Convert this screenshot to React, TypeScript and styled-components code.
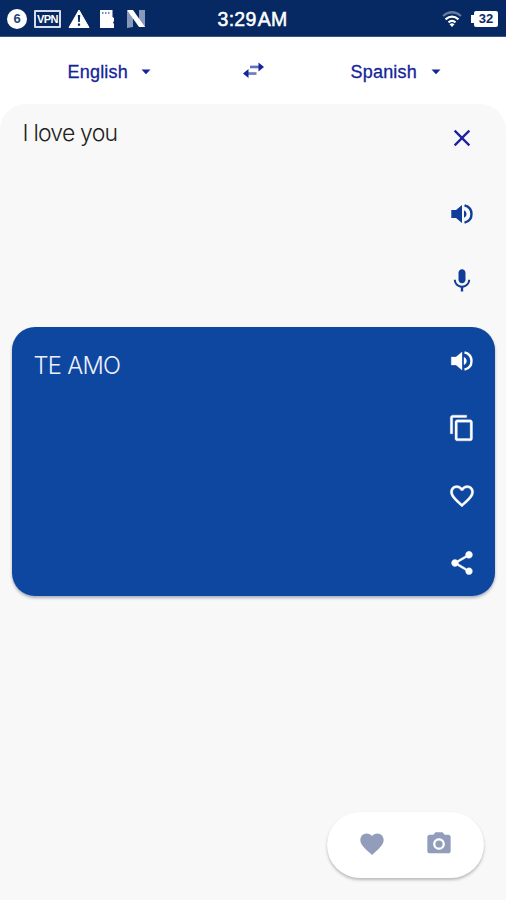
import React from 'react';
import styled, { createGlobalStyle } from 'styled-components';

const Global = createGlobalStyle`
  * { box-sizing: border-box; }
  body { margin: 0; background: #fff; font-family: "Liberation Sans", Arial, sans-serif; }
  button { border: 0; padding: 0; background: none; font: inherit; color: inherit; display: flex; align-items: center; }
  svg { display: block; flex: none; }
`;

const Screen = styled.div`
  width: 506px;
  height: 900px;
  display: flex;
  flex-direction: column;
  overflow: hidden;
  background: #fff;
`;

const StatusBar = styled.header`
  height: 37px;
  flex: none;
  display: grid;
  grid-template-columns: 1fr auto 1fr;
  align-items: center;
  padding: 1px 8px 0 7px;
  background: #062963;
  border-bottom: 1px solid #3c5583;
  color: #fff;
`;

const StatusGroup = styled.div<{ $end?: boolean }>`
  display: flex;
  align-items: center;
  justify-content: ${p => (p.$end ? 'flex-end' : 'flex-start')};
  gap: ${p => (p.$end ? 9 : 7)}px;
`;

const Clock = styled.time`
  width: 70px;
  padding-top: 1px;
  font-size: 19.5px;
  line-height: 22px;
  white-space: nowrap;
  -webkit-text-stroke: 0.5px #fff;
  word-spacing: -3.5px;
  letter-spacing: 0.3px;
`;

const Badge = styled.span`
  width: 20px;
  height: 20px;
  border-radius: 50%;
  background: #fff;
  color: #24427a;
  font-size: 13px;
  font-weight: 700;
  line-height: 20px;
  text-align: center;
`;

const VpnTag = styled.span`
  width: 27px;
  height: 18px;
  border: 2px solid #d5dceb;
  border-radius: 1px;
  font-size: 11px;
  font-weight: 700;
  line-height: 14px;
  letter-spacing: -0.5px;
  text-align: center;
`;

const Battery = styled.span`
  display: flex;
  align-items: center;
  &::before { content: ''; width: 3px; height: 8px; background: #fff; }
`;

const BatteryBody = styled.span`
  width: 24px;
  height: 16px;
  border-radius: 2px;
  background: #fff;
  color: #0a2a66;
  font-size: 13px;
  font-weight: 700;
  line-height: 16px;
  text-align: center;
`;

const LanguageBar = styled.nav`
  height: 67px;
  flex: none;
  display: grid;
  grid-template-columns: 238px 31px 1fr;
  align-items: center;
  padding-top: 3px;
  color: #14259a;
`;

const Language = styled.button<{ $start: number; $label: number }>`
  && {
    padding-left: ${p => p.$start}px;
    font-size: 18px;
  }
  line-height: 24px;
  -webkit-text-stroke: 0.3px currentColor;
  span { width: ${p => p.$label}px; text-align: left; letter-spacing: 0.2px; white-space: nowrap; }
`;

const Sheet = styled.main`
  flex: 1;
  display: flex;
  flex-direction: column;
  border-radius: 26px 26px 0 0;
  background: #f8f8f8;
`;

const Source = styled.section`
  height: 223px;
  flex: none;
  display: flex;
  justify-content: space-between;
  padding: 16px 30.5px 0 22.5px;
  color: #222;
`;

const Phrase = styled.p<{ $spacing: number; $size: number }>`
  margin: 0;
  font-family: Inter, "Liberation Sans", sans-serif;
  font-size: ${p => p.$size}px;
  font-weight: 300;
  line-height: 26px;
  letter-spacing: ${p => p.$spacing}px;
  white-space: nowrap;
`;

const SourceActions = styled.div`
  display: flex;
  flex-direction: column;
  align-items: center;
  color: #103c9a;
  button:nth-child(1) { margin: 4px 0 48px; color: #1c249c; }
  button:nth-child(2) { margin-bottom: 39px; }
`;

const Card = styled.section`
  height: 269px;
  flex: none;
  display: flex;
  justify-content: space-between;
  margin: 0 11px 0 12px;
  padding: 20px 19.5px 0 21.5px;
  border-radius: 23px;
  background: #0e479f;
  color: #fff;
  box-shadow: 0 2px 3px rgba(30, 40, 80, 0.35);
`;

const CardText = styled.div`
  padding-top: 6px;
  color: #eef0ff;
`;

const CardActions = styled.div`
  display: flex;
  flex-direction: column;
  gap: 39.3px;
  path { stroke: currentColor; stroke-width: 0.3; }
`;

const Dock = styled.div`
  width: 157px;
  height: 66px;
  margin: auto 22px 22px auto;
  display: flex;
  align-items: center;
  justify-content: center;
  gap: 39px;
  padding: 0 1px 2px 0;
  border-radius: 33px;
  background: #fff;
  color: #929dbc;
  box-shadow: 0 2px 3px rgba(0, 0, 0, 0.25);
`;

function Icon({ d, size = 28 }: { d: string; size?: number }) {
  return (
    <svg width={size} height={size} viewBox="0 0 24 24" fill="currentColor">
      <path d={d} />
    </svg>
  );
}

const Wave = styled.path`
  && { fill: none; stroke: currentColor; stroke-width: 2.4; }
`;

const Speaker = () => (
  <svg width={28} height={28} viewBox="0 0 28 28" fill="currentColor">
    <path d="M3.300 10h4.700l6-5v18l-6-5H3.300z" />
    <path d="M16 10.200c1.600.8 2.500 2.200 2.500 3.800s-.9 3-2.500 3.800z" />
    <Wave d="M16.500 5.300c4.300 1.100 7 4.400 7 8.700s-2.700 7.600-7 8.700" />
  </svg>
);

const paths = {
  close: 'M19 6.410 17.590 5 12 10.590 6.410 5 5 6.410 10.590 12 5 17.590 6.410 19 12 13.410 17.590 19 19 17.590 13.410 12z',
  mic: 'M12 14c1.660 0 3-1.340 3-3V5c0-1.660-1.340-3-3-3S9 3.340 9 5v6c0 1.660 1.340 3 3 3zM17.300 11c0 3-2.540 5.100-5.300 5.100S6.700 14 6.700 11H5c0 3.410 2.720 6.230 6 6.720V21h2v-3.280c3.280-.48 6-3.300 6-6.720h-1.700z',
  copy: 'M16 1H4c-1.100 0-2 .9-2 2v14h2V3h12V1zm3 4H8c-1.100 0-2 .9-2 2v14c0 1.100.9 2 2 2h11c1.100 0 2-.9 2-2V7c0-1.100-.9-2-2-2zm0 16H8V7h11v14z',
  heartOutline: 'M16.500 3c-1.740 0-3.410.81-4.500 2.090C10.910 3.810 9.240 3 7.500 3 4.420 3 2 5.420 2 8.500c0 3.780 3.400 6.860 8.550 11.540L12 21.350l1.450-1.320C18.600 15.360 22 12.280 22 8.500 22 5.420 19.580 3 16.500 3zm-4.400 15.550-.1.100-.1-.1C7.140 14.240 4 11.390 4 8.500 4 6.500 5.500 5 7.500 5c1.540 0 3.040.99 3.570 2.360h1.870C13.460 5.990 14.960 5 16.500 5c2 0 3.500 1.500 3.500 3.500 0 2.890-3.140 5.740-7.900 10.050z',
  share: 'M18 16.080c-.76 0-1.440.3-1.960.77L8.910 12.700c.05-.23.09-.46.09-.7s-.04-.47-.09-.7l7.050-4.110c.54.5 1.250.81 2.040.81 1.660 0 3-1.340 3-3s-1.340-3-3-3-3 1.340-3 3c0 .24.04.47.09.7L8.040 9.810C7.500 9.310 6.790 9 6 9c-1.660 0-3 1.340-3 3s1.340 3 3 3c.79 0 1.500-.31 2.040-.81l7.120 4.160c-.05.21-.08.43-.08.65 0 1.610 1.310 2.920 2.920 2.920s2.920-1.310 2.920-2.920-1.310-2.920-2.920-2.920z',
  heart: 'm12 21.350-1.450-1.320C5.400 15.360 2 12.280 2 8.500 2 5.420 4.420 3 7.500 3c1.740 0 3.410.81 4.500 2.090C13.090 3.810 14.760 3 16.500 3 19.580 3 22 5.420 22 8.500c0 3.780-3.400 6.860-8.550 11.540z',
  camera: 'M9 2 7.170 4H4c-1.100 0-2 .9-2 2v12c0 1.100.9 2 2 2h16c1.100 0 2-.9 2-2V6c0-1.100-.9-2-2-2h-3.170L15 2H9zm3 15c-2.760 0-5-2.240-5-5s2.240-5 5-5 5 2.240 5 5-2.240 5-5 5z',
};

const Caret = () => (
  <svg width="10" height="6" viewBox="0 0 10 6" fill="currentColor"><path d="M.5.5h9L5 5.300z" /></svg>
);

export default function App() {
  return (
    <Screen>
      <Global />
      <StatusBar>
        <StatusGroup>
          <Badge>6</Badge>
          <VpnTag>VPN</VpnTag>
          <svg width="22" height="20" viewBox="0 0 22 20">
            <path d="M11 1 21 18.500H1z" fill="#fff" stroke="#fff" strokeLinejoin="round" />
            <path d="M9.800 6h2.400l-.4 7h-1.600zM9.900 14.500h2.200v2.200H9.900z" fill="#062963" />
          </svg>
          <svg width="22" height="20" viewBox="0 0 22 20">
            <path d="M3 1h12.500v7l1.500 1v3l-1 1.500 1 1.500v4H3z" fill="#fff" />
            <path d="M5 3h1.500v2H5zm3 0h1.500v2H8zm3 0h1.500v2H11z" fill="#788bae" />
          </svg>
          <svg width="20" height="20" viewBox="0 0 20 20">
            <path d="M1 2h6v16L1 19zM13 1h6v17h-6z" fill="#8799bb" />
            <path d="M1 1h6l12 17h-6z" fill="#fff" />
          </svg>
        </StatusGroup>
        <Clock>3:29 AM</Clock>
        <StatusGroup $end>
          <svg width="20" height="18" viewBox="0 0 20 18" fill="none" stroke="#fff" strokeWidth="2.200">
            <path d="M1 6Q10-1.500 19 6" stroke="#65799f" />
            <path d="M3.500 9.300Q10 4 16.500 9.300M6.500 12.400Q10 9.500 13.500 12.400" />
            <path d="M7.500 14.200Q10 12.500 12.500 14.200L10 17z" fill="#fff" stroke="none" />
          </svg>
          <Battery><BatteryBody>32</BatteryBody></Battery>
        </StatusGroup>
      </StatusBar>
      <LanguageBar>
        <Language $start={67.5} $label={73.5}><span>English</span><Caret /></Language>
        <button aria-label="Swap languages">
          <svg width="31" height="28" viewBox="0 0 31 28" fill="currentColor">
            <path d="M12 7.600h9v2.700h-9z" fillOpacity=".65" />
            <path d="M20.500 4.500 26 9l-5.500 4.500zM10.500 11 5 15.500l5.500 4.500z" />
            <path d="M10 14.200h8.500v2.700H10z" fillOpacity=".6" />
          </svg>
        </button>
        <Language $start={81.5} $label={80.5}><span>Spanish</span><Caret /></Language>
      </LanguageBar>
      <Sheet>
        <Source>
          <Phrase $spacing={-0.8} $size={23}>I love you</Phrase>
          <SourceActions>
            <button aria-label="Clear"><Icon d={paths.close} /></button>
            <button aria-label="Listen"><Speaker /></button>
            <button aria-label="Speak"><Icon d={paths.mic} /></button>
          </SourceActions>
        </Source>
        <Card>
          <CardText><Phrase $spacing={-0.7} $size={23.7}>TE AMO</Phrase></CardText>
          <CardActions>
            <button aria-label="Listen"><Speaker /></button>
            <button aria-label="Copy"><Icon d={paths.copy} /></button>
            <button aria-label="Save"><Icon d={paths.heartOutline} /></button>
            <button aria-label="Share"><Icon d={paths.share} /></button>
          </CardActions>
        </Card>
        <Dock>
          <button aria-label="Favorites"><Icon d={paths.heart} /></button>
          <button aria-label="Camera">
            <svg width="28" height="28" viewBox="0 0 24 24" fill="currentColor">
              <path d={paths.camera} fillRule="evenodd" />
              <circle cx="12" cy="12" r="3.100" />
            </svg>
          </button>
        </Dock>
      </Sheet>
    </Screen>
  );
}
